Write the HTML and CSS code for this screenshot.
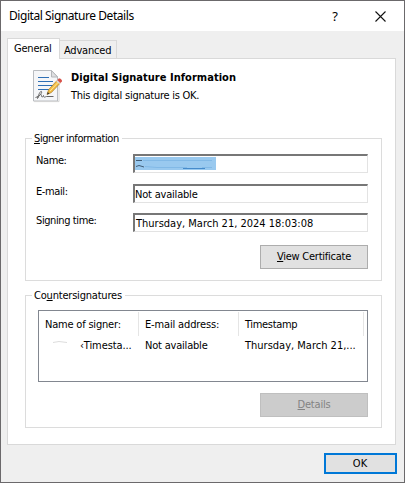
FILE: index.html
```html
<!DOCTYPE html>
<html lang="en">
<head>
<meta charset="utf-8">
<title>Digital Signature Details</title>
<link rel="stylesheet" href="styles.css">
</head>
<body>
<main class="dialog">
  <header class="titlebar">
    <span class="title">Digital Signature Details</span>
    <span class="help">?</span>
    <svg class="close" width="11" height="11" viewBox="0 0 11 11"><path d="M.5.5l10 10M10.5.5l-10 10" stroke="#111" stroke-width="1.1"/></svg>
  </header>
  <nav class="tabs">
    <span class="tab active">General</span>
    <span class="tab">Advanced</span>
  </nav>
  <section class="panel">
    <div class="intro">
      <svg class="doc" width="30" height="33" viewBox="0 0 30 33">
        <path d="M.5.5h18l6 6v24.5H.5z" fill="#f5f6f8" stroke="#b9bcc0"/>
        <path d="M1 31.6h25V8" fill="none" stroke="#d3d3d3"/>
        <path d="M18.5.5v6.5h6z" fill="#dedfe1" stroke="#b4b6b9"/>
        <path d="M5 7.5h11M5 11.5h15M5 15.5h15M5 19.5h11" stroke="#2e6fb5" stroke-width="1.2"/>
        <path d="M2.500 27.5c4-1 7-5 6-6s-3 3-4 7c2-4 4-5 4-3s1 2 2 0c0 3 2 1 3 1h7" fill="none" stroke="#666" stroke-width="1"/>
        <path d="M14 24.5l1.6-4.8L24 10.5l3 2.8-8.6 9.2z" fill="#f3bd42" stroke="#a77722" stroke-width=".7"/>
        <path d="M17 21l8.500-9" stroke="#ffe59a"/>
        <path d="M23.3 11.2l3 2.8 1-1.1-3-2.8z" fill="#d9dde2"/>
        <path d="M24.3 10.1l1.4-1.4c1.3-1 4.3 1.6 3 3l-1.4 1.3z" fill="#d75148"/>
        <path d="M14 24.5l.8-2.4 1.6 1.6z" fill="#333"/>
      </svg>
      <div>
        <h1><span class="w-heading">Digital Signature Information</span></h1>
        <p class="w-status">This digital signature is OK.</p>
      </div>
    </div>
    <fieldset class="signer">
      <legend class="w-signer"><u>S</u>igner information</legend>
      <div class="row"><label>Name:</label><div class="field name"><svg width="81" height="13" viewBox="0 0 81 13"><path d="M0 0h81v13H0z" fill="#99c9ef"/><path d="M1 3.5h6M1 9.500l3-1 5 1.500" fill="none" stroke="#283f55" stroke-width=".8"/><path d="M8 3.5h69M10 9.5l12 1h30M67 10.5h10" fill="none" stroke="#79b2e2" stroke-width=".7"/><path d="M48 11.5h22" stroke="#468bcb"/></svg></div></div>
      <div class="row"><label class="low">E-mail:</label><div class="field"><span class="w-na">Not available</span></div></div>
      <div class="row"><label class="low w-time">Signing time:</label><div class="field date"><span>Thursday, March 21, 2024 18:03:08</span></div></div>
      <button class="btn"><span class="w-view"><u>V</u>iew Certificate</span></button>
    </fieldset>
    <fieldset class="counter">
      <legend class="w-counter">Co<u>u</u>ntersignatures</legend>
      <div class="list">
        <div class="head"><span class="w-nos">Name of signer:</span><span class="w-addr">E-mail address:</span><span class="w-stamp">Timestamp</span></div>
        <div class="record"><span class="signer-name"><svg width="27" height="12" viewBox="0 0 27 12"><path d="M0 3.5l6-1 8 1" fill="none" stroke="#ddd"/></svg><span>‹Timesta...</span></span><span class="w-na">Not available</span><span class="w-short">Thursday, March 21,...</span></div>
      </div>
      <button class="btn disabled" disabled><span><u>D</u>etails</span></button>
    </fieldset>
  </section>
  <button class="ok">OK</button>
</main>
</body>
</html>
```
FILE: styles.css
```css
* { box-sizing: border-box; }
body { margin: 0; font: 11px/14px "DejaVu Sans Condensed", "DejaVu Sans", sans-serif; font-stretch: condensed; color: #000; }
h1, p { margin: 0; font-size: 11px; line-height: 14px; }
u { text-decoration: underline; text-underline-offset: 1px; }
.dialog { width: 405px; height: 483px; border: 1px solid #6b696b; background: #efefef; display: flex; flex-direction: column; }
.titlebar { height: 30px; flex: none; background: #fff; display: flex; align-items: center; padding: 0 18px 0 8px; font: 12px/16px "Noto Sans", sans-serif; }
.title { flex: 1; white-space: nowrap; letter-spacing: -.44px; }
.help { font-size: 13px; margin-right: 37px; }
.tabs { display: flex; align-items: flex-end; height: 27px; flex: none; padding-left: 6px; }
.tab { height: 18px; width: 57px; border: 1px solid #d9d9d9; border-width: 1px 1px 0 0; padding: 3px 0 0 4px; letter-spacing: -.2px; }
.tab.active { height: 21px; width: 53px; margin-bottom: -1px; border-left-width: 1px; background: #fff; padding: 3px 0 0 6px; z-index: 1; }
.panel { width: 389px; height: 387px; flex: none; margin-left: 6px; border: 1px solid #d9d9d9; background: #fff; padding: 11px 13px 0 17px; }
.intro { display: flex; height: 62px; padding-left: 8px; gap: 8px; white-space: nowrap; }
.intro h1 { margin-top: 1px; }
.intro p { margin-top: 4px; }
fieldset { margin: 0; border: 1px solid #dcdcdc; min-width: 0; width: 357px; }
legend { padding: 0 3px 0 2px; height: 13px; white-space: nowrap; }
.signer { height: 149px; padding: 9px 13px 0 10px; }
.signer legend { margin-left: -4px; }
.counter { height: 139px; margin-top: 8px; padding: 8px 13px 0 12px; }
.counter legend { margin-left: -6px; }
.row { display: flex; height: 19px; margin-bottom: 11px; white-space: nowrap; }
.row:nth-of-type(2) { margin-bottom: 10px; }
.row label { width: 97px; letter-spacing: -.4px; }
.row .low { padding-top: 1px; }
.field { width: 235px; height: 19px; border: 1px solid #e3e3e3; border-top: 2px solid #777; border-left: 2px solid #777; padding: 2px 0 0; }
.field.date { padding-left: 1px; }
.field.name { padding: 1px 0 0; }
.field svg { display: block; }
.w-heading { letter-spacing: .03px; }
.w-status { letter-spacing: -.25px; }
.w-signer { letter-spacing: -.4px; }
.w-counter, .w-na, .w-nos { letter-spacing: -.2px; }
.w-addr { letter-spacing: -.15px; }
.w-view { letter-spacing: -.25px; }
.w-stamp { letter-spacing: -.33px; }
.btn, .ok { font: inherit; color: #000; display: block; padding: 0; background: #e1e1e1; border: 1px solid #adadad; border-radius: 0; }
.btn { width: 108px; height: 24px; margin-left: auto; }
.signer .btn { margin-top: 13px; }
.list { width: 330px; height: 72px; border: 1px solid #828790; padding: 1px 0 0; white-space: nowrap; }
.head, .record { display: grid; grid-template-columns: 100px 100px 125px; }
.head { height: 24px; }
.head span { border-right: 1px solid #e5e5e5; padding: 6px 0 0 6px; }
.record > span { padding: 3px 0 0 6px; }
.record .signer-name { display: flex; padding-left: 14px; }
.signer-name span { letter-spacing: -.1px; }
.counter .btn { margin-top: 11px; }
.btn.disabled { background: #ccc; border-color: #bfbfbf; color: #838383; letter-spacing: -.2px; }
.ok { width: 73px; height: 21px; margin: 8px 0 0 323px; border: 2px solid #0078d7; padding: 1px 1px 0 0; }
```
